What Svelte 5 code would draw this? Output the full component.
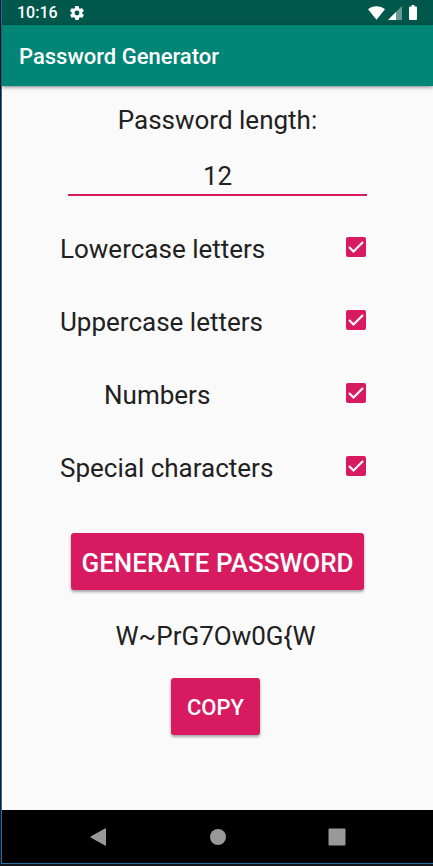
<script>
  let length = $state('12');
  let password = $state('W~PrG7Ow0G{W');
  let options = $state([
    { id: 'lower', label: 'Lowercase letters', chars: 'abcdefghijklmnopqrstuvwxyz', checked: true },
    { id: 'upper', label: 'Uppercase letters', chars: 'ABCDEFGHIJKLMNOPQRSTUVWXYZ', checked: true },
    { id: 'digits', label: 'Numbers', chars: '0123456789', checked: true, indent: true },
    { id: 'special', label: 'Special characters', chars: '!#$%&*+-=?@^_{}~', checked: true }
  ]);

  function generate() {
    const pool = options.filter((o) => o.checked).map((o) => o.chars).join('');
    if (!pool) return;
    const count = Math.max(1, parseInt(length) || 12);
    password = Array.from({ length: count }, () => pool[Math.floor(Math.random() * pool.length)]).join('');
  }

  function copy() {
    navigator.clipboard?.writeText(password);
  }
</script>

<div class="frame">
  <div class="screen">
    <div class="status">
      <span class="time">10:16</span>
      <svg class="gear" viewBox="2 2 20 20" aria-hidden="true">
        <path d="M19.4 13c.1-.3.1-.6.1-1s0-.7-.1-1l2.1-1.6c.2-.2.2-.4.1-.6l-2-3.5c-.1-.2-.4-.3-.6-.2l-2.5 1c-.5-.4-1.1-.7-1.7-1l-.4-2.6c0-.3-.2-.5-.5-.5h-4c-.2 0-.5.2-.5.4L9 5.1c-.6.2-1.1.6-1.7 1l-2.5-1c-.2-.1-.5 0-.6.2l-2 3.5c-.1.2 0 .4.2.6L4.5 11c0 .3-.1.7-.1 1s0 .7.1 1l-2.1 1.6c-.2.2-.2.4-.1.6l2 3.5c.1.2.4.3.6.2l2.5-1c.5.4 1.1.7 1.7 1l.4 2.6c0 .3.2.5.5.5h4c.2 0 .5-.2.5-.4l.4-2.7c.6-.2 1.1-.6 1.7-1l2.5 1c.2.1.5 0 .6-.2l2-3.5c.1-.2.1-.5-.1-.6L19.4 13zM12 15.5a3.5 3.5 0 1 1 0-7 3.5 3.5 0 0 1 0 7z" />
      </svg>
      <div class="signals">
        <svg width="17" height="14" viewBox="0 0 17 14" aria-hidden="true">
          <path d="M0 3.2C2.4 1.2 5.2.2 8.5.2s6.100 1 8.500 3L8.500 13.800z" />
        </svg>
        <svg width="14" height="14" viewBox="0 0 14 14" aria-hidden="true">
          <path d="M0 14L14 0v14z" opacity=".4" />
          <path d="M0 14L8 6v8z" />
        </svg>
        <svg class="battery" width="8" height="15" viewBox="0 0 8 15" aria-hidden="true">
          <path d="M2.5 0h3v1.500H7a1 1 0 0 1 1 1V14a1 1 0 0 1-1 1H1a1 1 0 0 1-1-1V2.500a1 1 0 0 1 1-1h1.500z" />
        </svg>
      </div>
    </div>

    <header><h1>Password Generator</h1></header>

    <main>
      <label class="line" for="length">Password length:</label>
      <input id="length" class="length" type="text" inputmode="numeric" bind:value={length} />

      <div class="options">
        {#each options as option (option.id)}
          <div class="option">
            <label for={option.id} class:indent={option.indent}>{option.label}</label>
            <span class="box">
              <input id={option.id} type="checkbox" bind:checked={option.checked} />
              <svg viewBox="0 0 20 20" aria-hidden="true"><path d="M3 10L7.500 14.500 17 5" /></svg>
            </span>
          </div>
        {/each}
      </div>

      <button class="action generate" onclick={generate}>GENERATE PASSWORD</button>
      <section>
        <output class="line">{password}</output>
        <button class="action copy" onclick={copy}>COPY</button>
      </section>
    </main>

    <nav>
      <button aria-label="Back">
        <svg width="18" height="18" viewBox="0 0 18 18"><path d="M1 8.200L15 .4q1-.5 1 .6v16q0 1.100-1 .6L1 9.800q-1-.8 0-1.600z" /></svg>
      </button>
      <button aria-label="Home">
        <svg width="18" height="18" viewBox="0 0 18 18"><circle cx="9" cy="9" r="8" /></svg>
      </button>
      <button aria-label="Recent apps">
        <svg width="18" height="18" viewBox="0 0 18 18"><rect x="0.500" y="0.500" width="17" height="17" rx="1" /></svg>
      </button>
    </nav>
  </div>
</div>

<style>
  :global(body) {
    margin: 0;
    background: #15151c;
  }
  .frame {
    box-sizing: border-box;
    min-height: 100vh;
    padding: 0 0 2px 1px;
    display: flex;
    font-family: Roboto, "Liberation Sans", sans-serif;
    color: #212121;
  }
  .screen {
    flex: 1;
    display: flex;
    flex-direction: column;
    border-left: 1px solid #2471a6;
    border-bottom: 1px solid #2471a6;
    background: #fafafa;
  }
  .status {
    display: flex;
    align-items: center;
    height: 25px;
    padding: 0 15px;
    background: #00574b;
    color: #fff;
  }
  .status svg {
    fill: #fff;
  }
  .time {
    font-size: 16px;
    font-weight: 500;
    line-height: 24px;
  }
  .gear {
    width: 14px;
    height: 14px;
    margin-left: 12px;
  }
  .signals {
    display: flex;
    align-items: center;
    gap: 3px;
    margin-left: auto;
    padding-right: 1px;
  }
  .battery {
    margin-left: 4px;
  }
  header {
    height: 61px;
    display: flex;
    align-items: center;
    padding: 2px 17px 0;
    box-sizing: border-box;
    background: #008577;
    box-shadow: 0 1px 4px rgba(0, 0, 0, 0.5);
  }
  h1 {
    margin: 0;
    font-size: 22px;
    font-weight: 500;
    line-height: 28px;
    color: #fff;
  }
  main {
    flex: 1;
    display: flex;
    flex-direction: column;
    align-items: center;
    padding: 18px 0 24px;
  }
  .line {
    font-size: 26px;
    line-height: 32px;
  }
  .length {
    box-sizing: border-box;
    width: calc(100% - 132px);
    height: 38px;
    margin-top: 22px;
    padding: 0;
    border: 0;
    border-bottom: 2px solid #d81b60;
    outline: none;
    background: none;
    font: inherit;
    font-size: 26px;
    text-align: center;
    color: inherit;
  }
  .options {
    align-self: stretch;
    padding: 16px 67px 0 58px;
  }
  .option {
    display: flex;
    align-items: center;
    justify-content: space-between;
    height: 73px;
    font-size: 26px;
    line-height: 32px;
  }
  .indent {
    padding-left: 44px;
  }
  .box {
    display: grid;
    width: 20px;
    height: 20px;
    padding-bottom: 4px;
  }
  .box input,
  .box svg {
    grid-area: 1 / 1;
    width: 20px;
    height: 20px;
    margin: 0;
  }
  .box input {
    box-sizing: border-box;
    appearance: none;
    border: 2px solid #757575;
    border-radius: 2px;
  }
  .box input:checked {
    border-color: #d81b60;
    background: #d81b60;
  }
  .box svg {
    pointer-events: none;
    fill: none;
    stroke: #fafafa;
    stroke-width: 2.2;
  }
  .action {
    height: 57px;
    border: 0;
    border-radius: 3px;
    background: #d81b60;
    box-shadow: 0 2px 3px rgba(0, 0, 0, 0.35);
    color: #fff;
    font-family: inherit;
    font-weight: 500;
  }
  .generate {
    margin-top: 29px;
    padding: 2px 10px 0;
    font-size: 26px;
  }
  section {
    display: flex;
    flex-direction: column;
    align-items: center;
    gap: 26px;
    padding: 30px 4px 0 0;
  }
  .copy {
    padding: 2px 16px 0;
    font-size: 22px;
  }
  nav {
    display: flex;
    justify-content: center;
    gap: 71px;
    height: 53px;
    background: #000;
  }
  nav button {
    display: flex;
    align-items: center;
    justify-content: center;
    width: 48px;
    padding: 0;
    border: 0;
    background: none;
  }
  nav svg {
    fill: #999;
  }
</style>
